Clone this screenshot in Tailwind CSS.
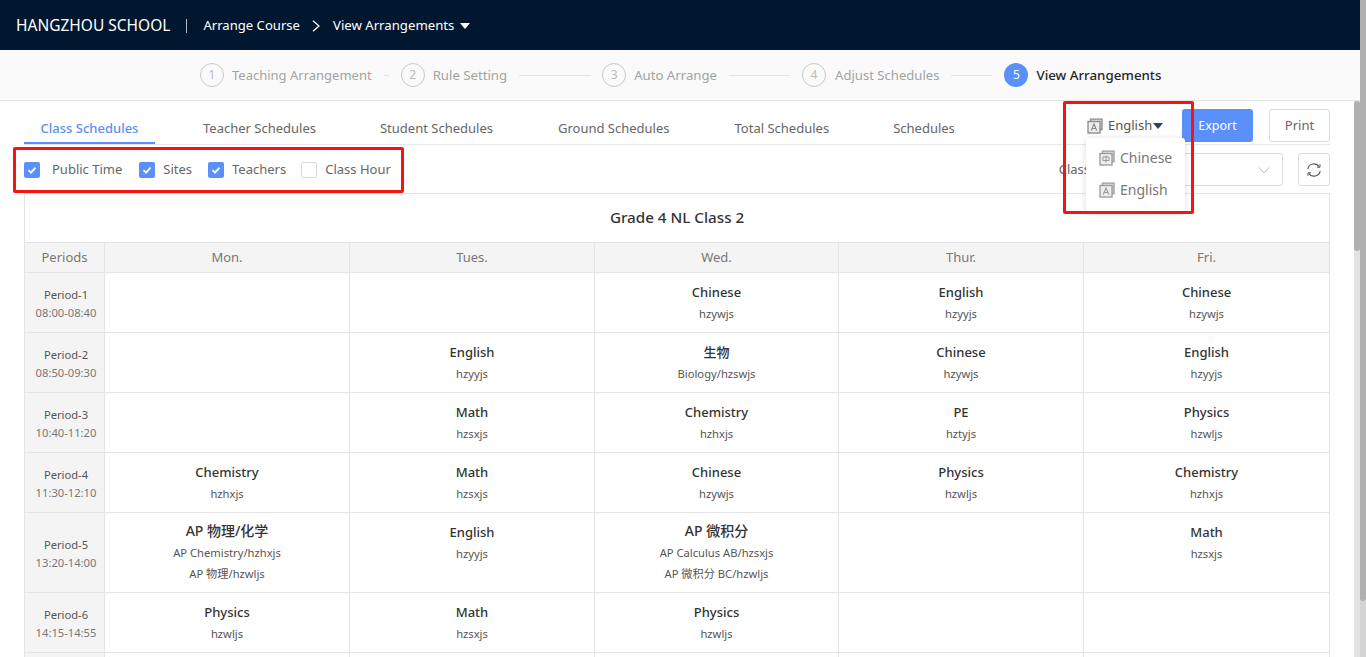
<!DOCTYPE html>
<html lang="en">
<head>
  <meta charset="UTF-8" />
  <title>View Arrangements</title>
  <script src="https://cdn.jsdelivr.net/npm/@tailwindcss/browser@4"></script>
</head>
<body class="h-[657px] overflow-hidden bg-white font-['Noto_Sans','Noto_Sans_CJK_SC',sans-serif] text-[13px] text-[#333]">
<div class="relative flex h-[657px] w-[1360px] flex-col overflow-hidden">
  <!-- Top bar -->
  <header class="flex h-[50px] shrink-0 items-center bg-[#00172f] pl-4 pt-[2px] text-white">
    <span class="text-[15.500px]">HANGZHOU SCHOOL</span>
    <span class="mx-[16px] h-[14px] w-px bg-white/70"></span>
    <span class="text-[13.100px]">Arrange Course</span>
    <svg class="ml-[10px] mr-[11px] h-3 w-3" viewBox="0 0 12 12" fill="none" stroke="#fff" stroke-width="1.2"><path d="M3 .8 9 6l-6 5.200"/></svg>
    <span class="text-[13.200px]">View Arrangements</span>
    <span class="ml-[6px] h-0 w-0 border-x-[5px] border-t-[6px] border-x-transparent border-t-white"></span>
  </header>

  <!-- Steps -->
  <nav class="flex h-[51px] shrink-0 items-center border-b border-[#e4e4e4] bg-[#fafafa] pl-[200px] text-[13px] text-[#a3a3a3]">
    <span class="flex h-6 w-6 items-center justify-center rounded-full border border-[#c8c8c8] text-xs text-[#bbb]">1</span>
    <span class="ml-2 pt-[1px]">Teaching Arrangement</span>
    <span class="mx-[12px] h-px w-[5px] bg-[#e4e4e4]"></span>
    <span class="flex h-6 w-6 items-center justify-center rounded-full border border-[#c8c8c8] text-xs text-[#bbb]">2</span>
    <span class="ml-2 pt-[1px] text-[13.200px]">Rule Setting</span>
    <span class="ml-[12px] mr-[11px] h-px w-[72px] bg-[#e4e4e4]"></span>
    <span class="flex h-6 w-6 items-center justify-center rounded-full border border-[#c8c8c8] text-xs text-[#bbb]">3</span>
    <span class="ml-2 pt-[1px] text-[13.200px]">Auto Arrange</span>
    <span class="mx-[12px] h-px w-[61px] bg-[#e4e4e4]"></span>
    <span class="flex h-6 w-6 items-center justify-center rounded-full border border-[#c8c8c8] text-xs text-[#bbb]">4</span>
    <span class="ml-[9px] pt-[1px] text-[13.100px]">Adjust Schedules</span>
    <span class="mx-[12px] h-px w-[41px] bg-[#e4e4e4]"></span>
    <span class="flex h-6 w-6 items-center justify-center rounded-full bg-[#5b8ff9] text-xs text-white">5</span>
    <span class="ml-2 pt-[1px] text-[13.300px] font-medium text-[#262626]">View Arrangements</span>
  </nav>

  <main class="flex-1 pl-6 pr-[30px]">
    <!-- Tabs -->
    <div class="flex h-[44px] justify-between border-b border-[#e8e8e8]">
      <div class="flex h-full whitespace-nowrap text-[#666]">
        <span class="flex w-[131px] items-center justify-center border-b-2 border-[#5b8ff9] pt-[14px] font-medium text-[#5b8ff9]">Class Schedules</span>
        <span class="ml-[48px] flex items-center pt-[13px]">Teacher Schedules</span>
        <span class="ml-[64px] flex items-center pt-[13px]">Student Schedules</span>
        <span class="ml-[65px] flex items-center pt-[13px]">Ground Schedules</span>
        <span class="ml-[65px] flex items-center pt-[13px]">Total Schedules</span>
        <span class="ml-[64px] flex items-center pt-[13px]">Schedules</span>
      </div>
      <div class="flex gap-4 pt-2">
        <button class="h-[33px] w-[71px] rounded-[3px] bg-[#5b8ff9] pt-[1px] text-[12.500px] text-white">Export</button>
        <button class="h-[33px] w-[61px] rounded-[3px] border border-[#dcdcdc] bg-white text-[13px] text-[#666]">Print</button>
      </div>
    </div>

    <!-- Options row -->
    <div class="flex h-[48px] items-center justify-between pt-[1px]">
      <div class="flex items-center text-[#666]">
        <span class="flex h-4 w-4 items-center justify-center rounded-[2px] bg-[#5b8ff9]"><svg class="h-3 w-3" viewBox="0 0 12 12" fill="none" stroke="#fff" stroke-width="1.8"><path d="M2.500 6.200 5 8.600l4.500-5"/></svg></span>
        <span class="ml-3">Public Time</span>
        <span class="ml-[17px] flex h-4 w-4 items-center justify-center rounded-[2px] bg-[#5b8ff9]"><svg class="h-3 w-3" viewBox="0 0 12 12" fill="none" stroke="#fff" stroke-width="1.8"><path d="M2.500 6.200 5 8.600l4.500-5"/></svg></span>
        <span class="ml-2">Sites</span>
        <span class="ml-[16px] flex h-4 w-4 items-center justify-center rounded-[2px] bg-[#5b8ff9]"><svg class="h-3 w-3" viewBox="0 0 12 12" fill="none" stroke="#fff" stroke-width="1.8"><path d="M2.500 6.200 5 8.600l4.500-5"/></svg></span>
        <span class="ml-2">Teachers</span>
        <span class="ml-[15px] h-4 w-4 rounded-[2px] border border-[#d9d9d9]"></span>
        <span class="ml-2">Class Hour</span>
      </div>
      <div class="flex items-center gap-[15px]">
        <span class="mr-[-2px] text-[#666]">Class</span>
        <span class="flex h-[33px] w-[180px] items-center justify-end rounded-[3px] border border-[#dcdcdc] pr-[12px]"><svg class="h-3 w-3" viewBox="0 0 12 12" fill="none" stroke="#bbb"><path d="M1 3.500 6 9l5-5.500"/></svg></span>
        <span class="flex h-[33px] w-8 items-center justify-center rounded-[3px] border border-[#dcdcdc]"><svg class="h-4 w-4" viewBox="0 0 16 16" fill="none" stroke="#555" stroke-width="1.1"><path d="M1.800 7.200A6.300 6.300 0 0 1 13.200 4.600M14.200 8.800A6.300 6.300 0 0 1 2.800 11.400"/><path d="M14 2.200V5.200H11M2 13.800V10.800H5" stroke-width="1"/></svg></span>
      </div>
    </div>

    <!-- Schedule table -->
    <table class="w-[1306px] table-fixed border-collapse border border-[#e4e4e4] text-center text-[11.200px] text-[#555]">
      <colgroup><col class="w-[80px]" /><col class="w-[245px]" /><col class="w-[245px]" /><col class="w-[244px]" /><col class="w-[245px]" /><col class="w-[246px]" /></colgroup>
      <tbody>
        <tr class="h-[49px]"><td colspan="6" class="pb-[2px] text-[15.200px] font-medium text-[#333]">Grade 4 NL Class 2</td></tr>
        <tr class="h-[30px] bg-[#f4f4f4] text-[13px] text-[#777]">
          <td class="border border-[#e4e4e4]">Periods</td><td class="border border-[#e4e4e4]">Mon.</td><td class="border border-[#e4e4e4]">Tues.</td><td class="border border-[#e4e4e4]">Wed.</td><td class="border border-[#e4e4e4]">Thur.</td><td class="border border-[#e4e4e4]">Fri.</td>
        </tr>
        <tr class="h-[60px]">
          <td class="border border-[#e4e4e4] bg-[#f4f4f4] pl-[3px] pt-[3px] leading-[18px]">Period-1<br /><span class="text-[#777]">08:00-08:40</span></td>
          <td class="border border-[#e4e4e4]"></td>
          <td class="border border-[#e4e4e4]"></td>
          <td class="border border-[#e4e4e4] leading-[22px]"><div class="text-[13px] font-medium text-[#333]">Chinese</div>hzywjs</td>
          <td class="border border-[#e4e4e4] leading-[22px]"><div class="text-[13px] font-medium text-[#333]">English</div>hzyyjs</td>
          <td class="border border-[#e4e4e4] leading-[22px]"><div class="text-[13px] font-medium text-[#333]">Chinese</div>hzywjs</td>
        </tr>
        <tr class="h-[60px]">
          <td class="border border-[#e4e4e4] bg-[#f4f4f4] pl-[3px] pt-[3px] leading-[18px]">Period-2<br /><span class="text-[#777]">08:50-09:30</span></td>
          <td class="border border-[#e4e4e4]"></td>
          <td class="border border-[#e4e4e4] leading-[22px]"><div class="text-[13px] font-medium text-[#333]">English</div>hzyyjs</td>
          <td class="border border-[#e4e4e4] leading-[22px]"><div class="text-[13px] font-medium text-[#333]">生物</div>Biology/hzswjs</td>
          <td class="border border-[#e4e4e4] leading-[22px]"><div class="text-[13px] font-medium text-[#333]">Chinese</div>hzywjs</td>
          <td class="border border-[#e4e4e4] leading-[22px]"><div class="text-[13px] font-medium text-[#333]">English</div>hzyyjs</td>
        </tr>
        <tr class="h-[60px]">
          <td class="border border-[#e4e4e4] bg-[#f4f4f4] pl-[3px] pt-[3px] leading-[18px]">Period-3<br /><span class="text-[#777]">10:40-11:20</span></td>
          <td class="border border-[#e4e4e4]"></td>
          <td class="border border-[#e4e4e4] leading-[22px]"><div class="text-[13px] font-medium text-[#333]">Math</div>hzsxjs</td>
          <td class="border border-[#e4e4e4] leading-[22px]"><div class="text-[13px] font-medium text-[#333]">Chemistry</div>hzhxjs</td>
          <td class="border border-[#e4e4e4] leading-[22px]"><div class="text-[13px] font-medium text-[#333]">PE</div>hztyjs</td>
          <td class="border border-[#e4e4e4] leading-[22px]"><div class="text-[13px] font-medium text-[#333]">Physics</div>hzwljs</td>
        </tr>
        <tr class="h-[60px]">
          <td class="border border-[#e4e4e4] bg-[#f4f4f4] pl-[3px] pt-[3px] leading-[18px]">Period-4<br /><span class="text-[#777]">11:30-12:10</span></td>
          <td class="border border-[#e4e4e4] leading-[22px]"><div class="text-[13px] font-medium text-[#333]">Chemistry</div>hzhxjs</td>
          <td class="border border-[#e4e4e4] leading-[22px]"><div class="text-[13px] font-medium text-[#333]">Math</div>hzsxjs</td>
          <td class="border border-[#e4e4e4] leading-[22px]"><div class="text-[13px] font-medium text-[#333]">Chinese</div>hzywjs</td>
          <td class="border border-[#e4e4e4] leading-[22px]"><div class="text-[13px] font-medium text-[#333]">Physics</div>hzwljs</td>
          <td class="border border-[#e4e4e4] leading-[22px]"><div class="text-[13px] font-medium text-[#333]">Chemistry</div>hzhxjs</td>
        </tr>
        <tr class="h-[80px]">
          <td class="border border-[#e4e4e4] bg-[#f4f4f4] pl-[3px] pt-[3px] leading-[18px]">Period-5<br /><span class="text-[#777]">13:20-14:00</span></td>
          <td class="border border-[#e4e4e4] leading-[21px]"><div class="pb-[1px] text-sm font-medium text-[#333]">AP 物理/化学</div>AP Chemistry/hzhxjs<br />AP 物理/hzwljs</td>
          <td class="border border-[#e4e4e4] pt-[8px] align-top leading-[22px]"><div class="text-[13px] font-medium text-[#333]">English</div>hzyyjs</td>
          <td class="border border-[#e4e4e4] leading-[21px]"><div class="pb-[1px] text-sm font-medium text-[#333]">AP 微积分</div>AP Calculus AB/hzsxjs<br />AP 微积分 BC/hzwljs</td>
          <td class="border border-[#e4e4e4]"></td>
          <td class="border border-[#e4e4e4] pt-[8px] align-top leading-[22px]"><div class="text-[13px] font-medium text-[#333]">Math</div>hzsxjs</td>
        </tr>
        <tr class="h-[60px]">
          <td class="border border-[#e4e4e4] bg-[#f4f4f4] pl-[3px] pt-[3px] leading-[18px]">Period-6<br /><span class="text-[#777]">14:15-14:55</span></td>
          <td class="border border-[#e4e4e4] leading-[22px]"><div class="text-[13px] font-medium text-[#333]">Physics</div>hzwljs</td>
          <td class="border border-[#e4e4e4] leading-[22px]"><div class="text-[13px] font-medium text-[#333]">Math</div>hzsxjs</td>
          <td class="border border-[#e4e4e4] leading-[22px]"><div class="text-[13px] font-medium text-[#333]">Physics</div>hzwljs</td>
          <td class="border border-[#e4e4e4]"></td>
          <td class="border border-[#e4e4e4]"></td>
        </tr>
        <tr class="h-[60px]"><td class="border border-[#e4e4e4] bg-[#f4f4f4]"></td><td class="border border-[#e4e4e4]"></td><td class="border border-[#e4e4e4]"></td><td class="border border-[#e4e4e4]"></td><td class="border border-[#e4e4e4]"></td><td class="border border-[#e4e4e4]"></td></tr>
      </tbody>
    </table>
  </main>

  <!-- Language switch -->
  <div class="absolute left-[1087px] top-[116px] flex items-center text-[13px] text-[#555]">
    <svg class="h-4 w-4" viewBox="0 0 16 16" fill="none" stroke="#888" stroke-width="1.300"><path d="M3.500 3V1.200H15V11.500H13" fill="#ddd"/><rect x="1" y="3.500" width="12" height="11.500" fill="#eee"/><path d="M4.300 12.500 7 6l2.700 6.500M5.300 10.500h3.400" stroke-width="1.100"/></svg>
    <span class="ml-[5px]">English</span>
    <span class="ml-[1px] h-0 w-0 border-x-[5px] border-t-[6px] border-x-transparent border-t-[#2f4050]"></span>
  </div>

  <!-- Language dropdown -->
  <div class="absolute left-[1086px] top-[138px] h-[74px] w-[99px] rounded-[3px] bg-white pb-[3px] pl-[13px] pt-1 text-sm text-[#777] shadow-[0_1px_6px_rgba(0,0,0,0.14)]">
    <div class="flex h-8 items-center">
      <svg class="h-4 w-4" viewBox="0 0 16 16" fill="none" stroke="#999" stroke-width="1.300"><path d="M3.500 3V1.200H15V11.500H13" fill="#ddd"/><rect x="1" y="3.500" width="12" height="11.500" fill="#eee"/><path d="M4 7h6v3.500H4zM7 5.500v7" stroke-width="1"/></svg>
      <span class="ml-[5px]">Chinese</span>
    </div>
    <div class="flex h-8 items-center">
      <svg class="h-4 w-4" viewBox="0 0 16 16" fill="none" stroke="#999" stroke-width="1.300"><path d="M3.500 3V1.200H15V11.500H13" fill="#ddd"/><rect x="1" y="3.500" width="12" height="11.500" fill="#eee"/><path d="M4.300 12.500 7 6l2.700 6.500M5.300 10.500h3.400" stroke-width="1.100"/></svg>
      <span class="ml-[5px]">English</span>
    </div>
  </div>

  <!-- Red annotation boxes -->
  <div class="pointer-events-none absolute left-[13px] top-[147px] h-[46px] w-[391px] rounded-[2px] border-[3px] border-[#f5140f]"></div>
  <div class="pointer-events-none absolute left-[1063px] top-[101px] h-[113px] w-[131px] rounded-[2px] border-[3px] border-[#f5140f]"></div>

  <!-- Inner scrollbar -->
  <div class="absolute bottom-0 right-0 top-[101px] w-[6px] bg-[#e4e4e4]"><div class="h-[150px] rounded-[3px] bg-[#b0b0b0]"></div></div>
</div>
<!-- Outer scrollbar -->
<div class="absolute right-0 top-0 h-[657px] w-[6px] bg-[#d4d4d4]"><div class="h-[601px] rounded-b-[3px] bg-[#b0b0b0]"></div></div>
</body>
</html>
